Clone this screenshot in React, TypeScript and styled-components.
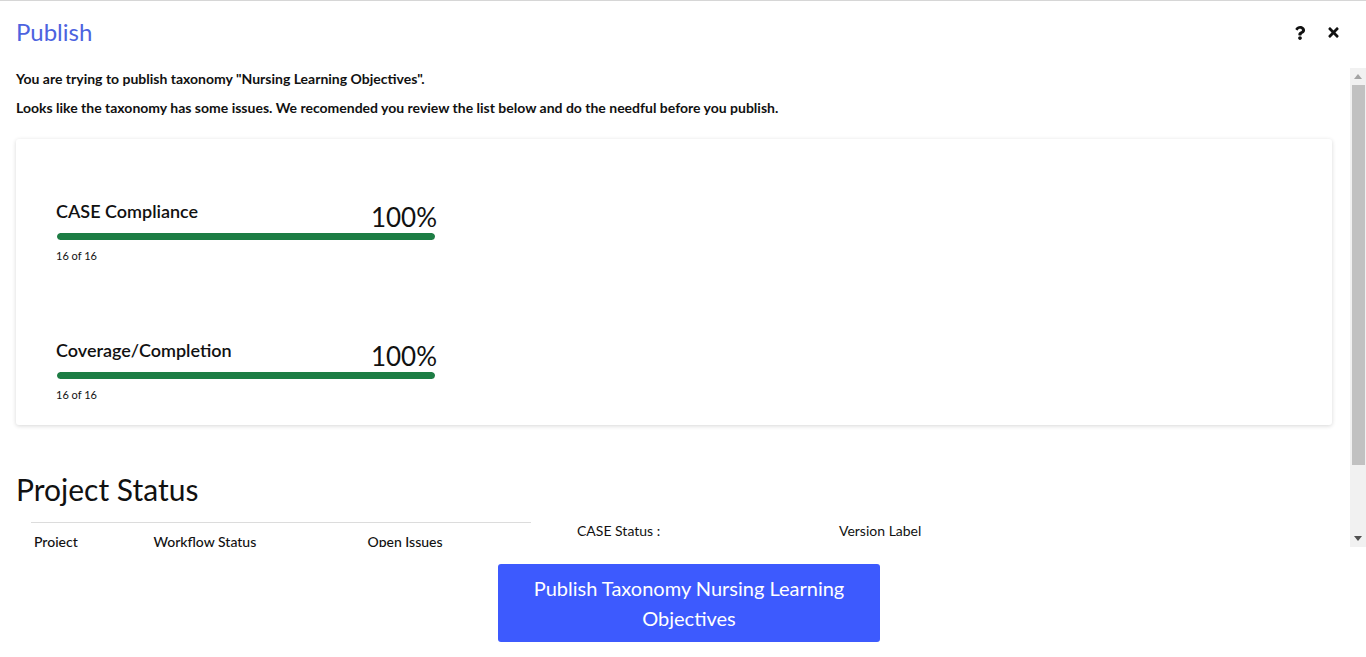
import React from 'react';
import styled, { createGlobalStyle } from 'styled-components';
import { FaQuestion, FaTimes } from 'react-icons/fa';

const GlobalStyle = createGlobalStyle`
  html, body {
    margin: 0;
    padding: 0;
    height: 100%;
    background: #fff;
  }
  body {
    font-family: Lato, "Open Sans", "Liberation Sans", sans-serif;
    color: #111;
    overflow: hidden;
  }
`;

const Modal = styled.div`
  height: 657px;
  border-top: 1px solid #d6d6d6;
  box-sizing: border-box;
  display: flex;
  flex-direction: column;
`;

const Header = styled.div`
  height: 67px;
  flex-shrink: 0;
  display: flex;
  align-items: flex-start;
  justify-content: space-between;
  padding: 16px 25px 0 16px;
  box-sizing: border-box;
`;

const Title = styled.h1`
  margin: 0;
  font-size: 24px;
  line-height: 30px;
  font-weight: 400;
  color: #4d63df;
`;

const HeaderTools = styled.div`
  display: flex;
  align-items: center;
  gap: 19px;
  padding-top: 8px;
  color: #111;
`;

const ToolButton = styled.span`
  display: inline-flex;
  width: 15px;
  justify-content: center;
`;

const ScrollArea = styled.div`
  flex: 1;
  min-height: 0;
  display: flex;
`;

const Body = styled.div`
  flex: 1;
  min-width: 0;
  overflow: hidden;
  padding: 0 18px 0 16px;
`;

const ScrollTrack = styled.div`
  width: 16px;
  flex-shrink: 0;
  background: #f1f1f1;
  display: flex;
  flex-direction: column;
  align-items: center;
`;

const ArrowBox = styled.div`
  height: 17px;
  width: 16px;
  display: flex;
  align-items: center;
  justify-content: center;
  flex-shrink: 0;
`;

const Thumb = styled.div`
  width: 13px;
  height: 380px;
  margin-left: 1px;
  background: #c1c1c1;
`;

const TrackRest = styled.div`
  flex: 1;
`;

const Intro = styled.p`
  margin: 0;
  font-size: 14px;
  font-weight: 700;
  line-height: 20px;
  padding: 1px 0 8px;
`;

const Card = styled.div`
  margin-top: 13px;
  border-radius: 3px;
  box-shadow: 0 1px 4px rgba(0, 0, 0, 0.16);
  padding: 61px 40px 22px;
  display: flex;
  flex-direction: column;
  gap: 75px;
`;

const Metric = styled.div`
  width: 379px;
`;

const MetricHead = styled.div`
  display: flex;
  justify-content: space-between;
  align-items: flex-start;
  height: 33px;
`;

const MetricName = styled.span`
  font-size: 18px;
  line-height: 22px;
  font-weight: 600;
`;

const MetricValue = styled.span`
  font-size: 26px;
  line-height: 34px;
  font-weight: 400;
  margin-right: -2px;
`;

const Track = styled.div`
  margin-left: 1px;
  height: 7px;
  border-radius: 4px;
  background: #e6e6e6;
  overflow: hidden;
`;

const Fill = styled.div`
  height: 100%;
  background: #1d7d44;
  border-radius: 4px;
`;

const MetricCount = styled.div`
  margin-top: 8px;
  font-size: 11px;
  line-height: 16px;
`;

const SectionTitle = styled.h2`
  margin: 46px 0 0;
  font-size: 30px;
  line-height: 36px;
  font-weight: 400;
`;

const StatusRow = styled.div`
  display: flex;
  align-items: flex-start;
  margin-top: 15px;
  padding-bottom: 30px;
`;

const Table = styled.table`
  margin-left: 15px;
  width: 500px;
  border-collapse: collapse;
  border-top: 1px solid #dcdcdc;
  font-size: 14px;
`;

const Th = styled.th<{ $w: number }>`
  width: ${({ $w }) => $w}px;
  text-align: left;
  font-weight: 500;
  padding: 10px 3px 8px;
  line-height: 18px;
`;

const Td = styled.td`
  padding: 10px 3px;
  border-top: 1px solid #dcdcdc;
  line-height: 18px;
`;

const InfoGrid = styled.div`
  display: grid;
  grid-template-columns: 262px 200px;
  margin-left: 46px;
  font-size: 14px;
  line-height: 18px;
`;

const InfoCell = styled.div``;

const InfoValue = styled.div`
  padding-top: 10px;
  color: #333;
`;

const Footer = styled.div`
  height: 110px;
  flex-shrink: 0;
  display: flex;
  justify-content: center;
  padding: 17px 0 0 12px;
  box-sizing: border-box;
`;

const PublishButton = styled.button`
  width: 382px;
  height: 78px;
  border: none;
  border-radius: 3px;
  background: #3d5afe;
  color: #fff;
  font-family: Lato, "Open Sans", "Liberation Sans", sans-serif;
  font-size: 20px;
  line-height: 30px;
  padding: 9px 30px;
  cursor: pointer;
`;

const metrics = [
  { name: 'CASE Compliance', done: 16, total: 16 },
  { name: 'Coverage/Completion', done: 16, total: 16 },
];

function Arrow({ up, color }: { up?: boolean; color: string }) {
  return (
    <svg width="8" height="5" viewBox="0 0 8 5">
      <path d={up ? 'M0 5 L4 0 L8 5 Z' : 'M0 0 L8 0 L4 5 Z'} fill={color} />
    </svg>
  );
}

function App() {
  return (
    <>
      <GlobalStyle />
      <Modal>
        <Header>
          <Title>Publish</Title>
          <HeaderTools>
            <ToolButton><FaQuestion size={14} /></ToolButton>
            <ToolButton><FaTimes size={15} /></ToolButton>
          </HeaderTools>
        </Header>
        <ScrollArea>
          <Body>
            <Intro>You are trying to publish taxonomy "Nursing Learning Objectives".</Intro>
            <Intro>Looks like the taxonomy has some issues. We recomended you review the list below and do the needful before you publish.</Intro>
            <Card>
              {metrics.map((m) => {
                const pct = Math.round((m.done / m.total) * 100);
                return (
                  <Metric key={m.name}>
                    <MetricHead>
                      <MetricName>{m.name}</MetricName>
                      <MetricValue>{pct}%</MetricValue>
                    </MetricHead>
                    <Track>
                      <Fill style={{ width: `${pct}%` }} />
                    </Track>
                    <MetricCount>{m.done} of {m.total}</MetricCount>
                  </Metric>
                );
              })}
            </Card>
            <SectionTitle>Project Status</SectionTitle>
            <StatusRow>
              <Table>
                <thead>
                  <tr>
                    <Th $w={117}>Project</Th>
                    <Th $w={216}>Workflow Status</Th>
                    <Th $w={167}>Open Issues</Th>
                  </tr>
                </thead>
                <tbody>
                  <tr>
                    <Td>Nursing</Td>
                    <Td>Published</Td>
                    <Td>0</Td>
                  </tr>
                </tbody>
              </Table>
              <InfoGrid>
                <InfoCell>
                  CASE Status :
                  <InfoValue>Compliant</InfoValue>
                </InfoCell>
                <InfoCell>
                  Version Label
                  <InfoValue>1.0</InfoValue>
                </InfoCell>
              </InfoGrid>
            </StatusRow>
          </Body>
          <ScrollTrack>
            <ArrowBox><Arrow up color="#a3a3a3" /></ArrowBox>
            <Thumb />
            <TrackRest />
            <ArrowBox><Arrow color="#505050" /></ArrowBox>
          </ScrollTrack>
        </ScrollArea>
        <Footer>
          <PublishButton>Publish Taxonomy Nursing Learning Objectives</PublishButton>
        </Footer>
      </Modal>
    </>
  );
}

export default App;
